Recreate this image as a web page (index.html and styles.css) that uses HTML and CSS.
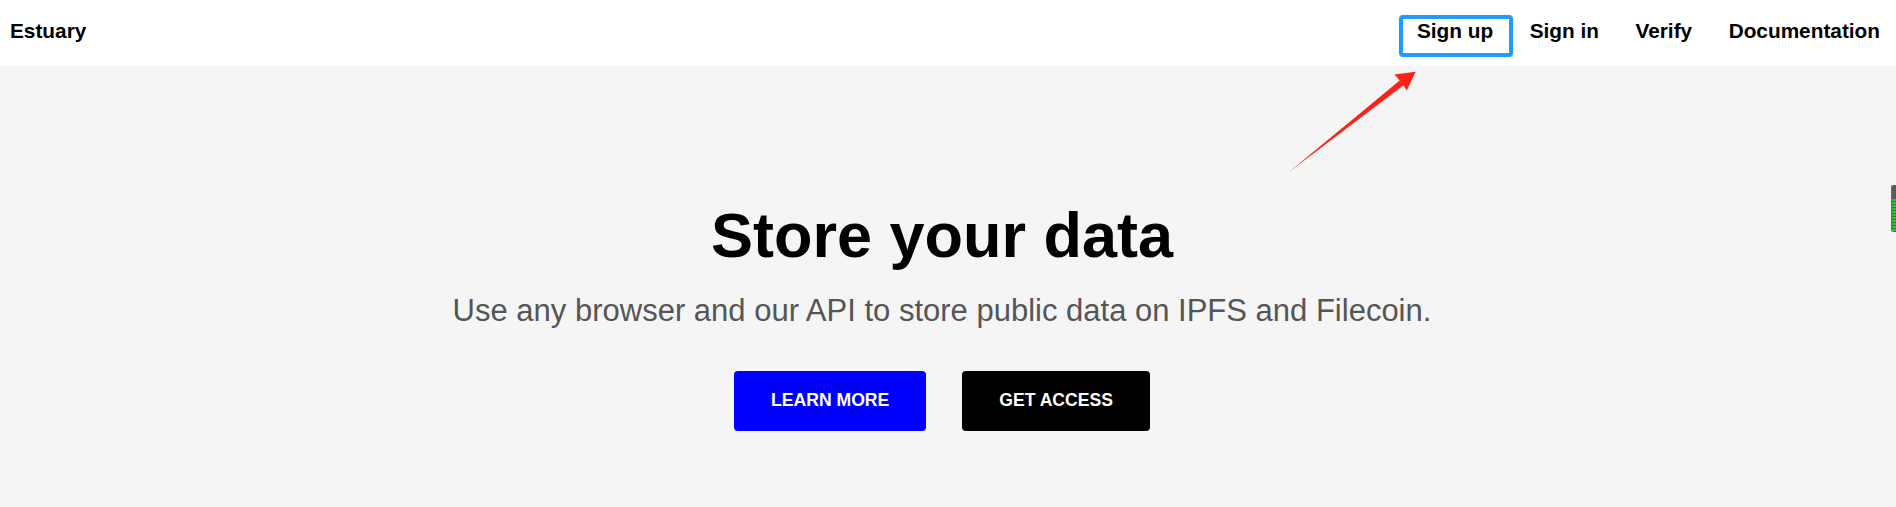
FILE: index.html
```html
<!DOCTYPE html>
<html lang="en">
<head>
<meta charset="UTF-8" />
<meta name="viewport" content="width=device-width, initial-scale=1.0"/>
<title>Estuary</title>
<link rel="stylesheet" href="styles.css">
</head>
<body>

<header class="site-header">
  <a class="brand" href="#">Estuary</a>
  <nav class="main-nav">
    <a class="nav-link highlighted" href="#">Sign up</a>
    <a class="nav-link" href="#">Sign in</a>
    <a class="nav-link" href="#">Verify</a>
    <a class="nav-link" href="#">Documentation</a>
  </nav>
</header>

<section class="hero">
  <h1>Store your data</h1>
  <p class="hero-sub">Use any browser and our API to store public data on IPFS and Filecoin.</p>
  <div class="hero-actions">
    <a class="btn btn-blue" href="#">LEARN MORE</a>
    <a class="btn btn-black" href="#">GET ACCESS</a>
  </div>
</section>

<!-- annotation arrow drawn over the page -->
<svg class="annotation" width="1896" height="507" viewBox="0 0 1896 507">
  <polygon fill="#ff2118" points="1289,172 1403.5,85.3 1406.7,90.5 1415.7,71.7 1394.5,74.5 1399.7,80.5" />
</svg>

<!-- little extension tab on the right edge -->
<div class="side-tab"></div>

</body>
</html>
```

FILE: styles.css
```css
body {
  margin: 0;
  font-family: "Liberation Sans", Arial, sans-serif;
  background-color: #f5f5f5;
  color: #000;
  min-height: 507px;
}
a {
  color: inherit;
  text-decoration: none;
}
.site-header {
  display: flex;
  align-items: center;
  justify-content: space-between;
  height: 61px;
  padding: 0 16px 5px 10px;
  background-color: #fff;
}
.brand {
  font-size: 20.8px;
  font-weight: bold;
}
.main-nav {
  display: flex;
  gap: 36.5px;
}
.nav-link {
  position: relative;
  font-size: 20.8px;
  font-weight: bold;
}
.nav-link.highlighted::after {
  content: "";
  position: absolute;
  left: -18px;
  right: -20px;
  top: -4px;
  bottom: -14px;
  border: 4px solid #1e9bff;
  border-radius: 4px;
}

.hero {
  padding: 132px 12px 0 0;
  text-align: center;
}
.hero h1 {
  margin: 0;
  font-size: 63px;
  line-height: 1.2;
  font-weight: bold;
}
.hero-sub {
  margin: 18px 0 0 0;
  font-size: 31px;
  line-height: 1.2;
  color: #555;
}
.hero-actions {
  display: flex;
  justify-content: center;
  gap: 36px;
  margin-top: 42px;
}
.btn {
  display: flex;
  align-items: center;
  height: 60px;
  padding: 0 37px;
  border-radius: 4px;
  font-size: 17.6px;
  font-weight: bold;
  color: #fff;
}
.btn-blue {
  background-color: #0000ff;
}
.btn-black {
  background-color: #000;
}

/* overlays */
.annotation {
  position: absolute;
  top: 0;
  left: 0;
  pointer-events: none;
}
.side-tab {
  position: absolute;
  top: 185px;
  right: 0;
  width: 4px;
  height: 47px;
  border-radius: 2px 0 0 2px;
  background: repeating-linear-gradient(to bottom, #2fbf3a 0, #2fbf3a 2px, #1d8a2a 2px, #1d8a2a 3px);
  border-top: 14px solid #5a5a5a;
  box-sizing: border-box;
  box-shadow: -1px 0 0 #6a6a6a;
}
```
